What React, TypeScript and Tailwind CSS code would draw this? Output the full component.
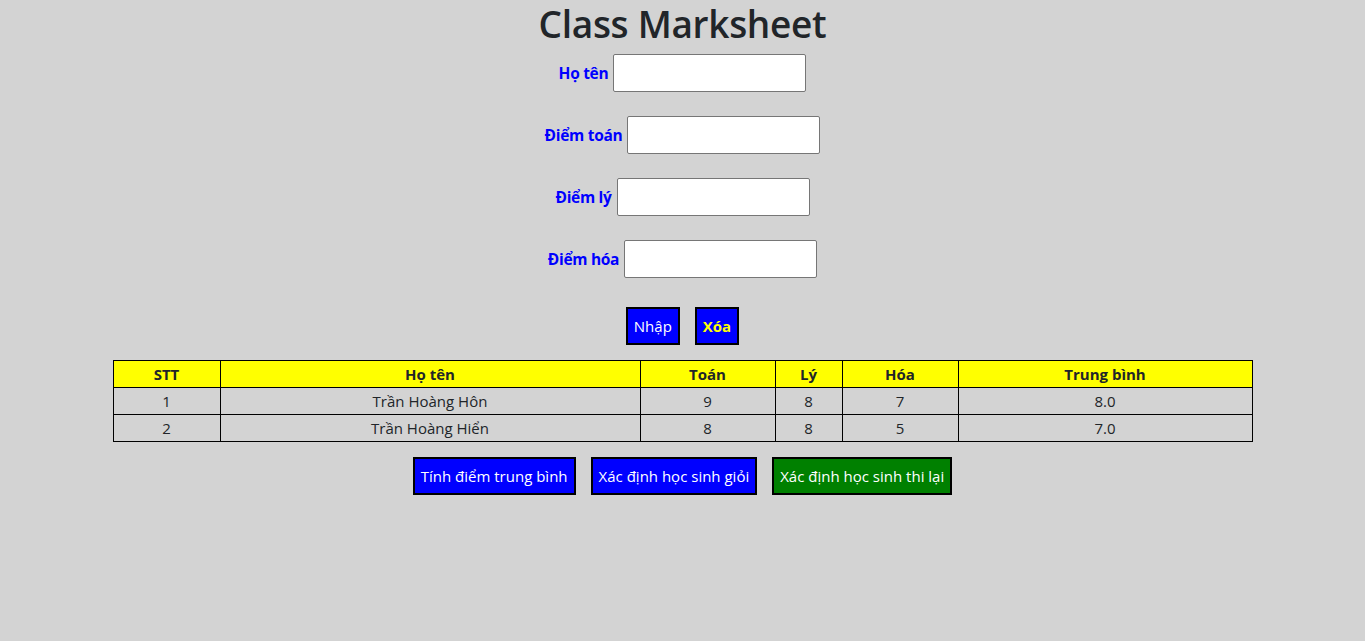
import React from 'react';

const fields = ['Họ tên', 'Điểm toán', 'Điểm lý', 'Điểm hóa'];

const students = [
  { stt: 1, name: 'Trần Hoàng Hôn', toan: 9, ly: 8, hoa: 7, tb: '8.0' },
  { stt: 2, name: 'Trần Hoàng Hiển', toan: 8, ly: 8, hoa: 5, tb: '7.0' },
];

const cols = [
  { label: 'STT', w: 'w-[107px]' },
  { label: 'Họ tên', w: 'w-[420px]' },
  { label: 'Toán', w: 'w-[135px]' },
  { label: 'Lý', w: 'w-[67px]' },
  { label: 'Hóa', w: 'w-[116px]' },
  { label: 'Trung bình', w: 'w-[294px]' },
];

const App: React.FC = () => {
  return (
    <div className="min-h-screen bg-[#d3d3d3] font-['Open_Sans','Noto_Sans',sans-serif] text-[#212529]">
      <div className="flex flex-col items-center">
        <h1 className="text-[37px] leading-[48px] font-semibold tracking-[-0.3px]">Class Marksheet</h1>

        <div className="mt-[6px] flex flex-col items-center gap-6">
          {fields.map((f) => (
            <div key={f} className="flex items-center gap-[5px]">
              <label className="pt-[2px] text-[15.5px] font-bold text-[#0000ff] tracking-[-0.3px]">{f}</label>
              <input
                type="text"
                className="h-[38px] w-[193px] rounded-[2px] border border-[#767676] bg-white"
              />
            </div>
          ))}
        </div>

        <div className="mt-[29px] flex gap-[15px]">
          <button className="h-[38px] border-2 border-black bg-[#0000ff] px-[6px] text-[15px] text-white">
            Nhập
          </button>
          <button className="h-[38px] border-2 border-black bg-[#0000ff] px-[6px] text-[15px] font-bold text-[#ffff00]">
            Xóa
          </button>
        </div>

        <table className="mt-[15px] w-[1140px] table-fixed border-collapse text-[15px]">
          <thead>
            <tr className="h-[27px] bg-[#ffff00]">
              {cols.map((c) => (
                <th key={c.label} className={`${c.w} border border-black font-bold`}>
                  {c.label}
                </th>
              ))}
            </tr>
          </thead>
          <tbody>
            {students.map((s) => (
              <tr key={s.stt} className="h-[27px] text-center">
                <td className="border border-black">{s.stt}</td>
                <td className="border border-black">{s.name}</td>
                <td className="border border-black">{s.toan}</td>
                <td className="border border-black">{s.ly}</td>
                <td className="border border-black">{s.hoa}</td>
                <td className="border border-black">{s.tb}</td>
              </tr>
            ))}
          </tbody>
        </table>

        <div className="mt-[15px] flex gap-[15px]">
          <button className="h-[38px] border-2 border-black bg-[#0000ff] px-[6px] text-[15px] text-white">
            Tính điểm trung bình
          </button>
          <button className="h-[38px] border-2 border-black bg-[#0000ff] px-[6px] text-[15px] text-white">
            Xác định học sinh giỏi
          </button>
          <button className="h-[38px] border-2 border-black bg-[#008000] px-[6px] text-[15px] text-white">
            Xác định học sinh thi lại
          </button>
        </div>
      </div>
    </div>
  );
};

export default App;
